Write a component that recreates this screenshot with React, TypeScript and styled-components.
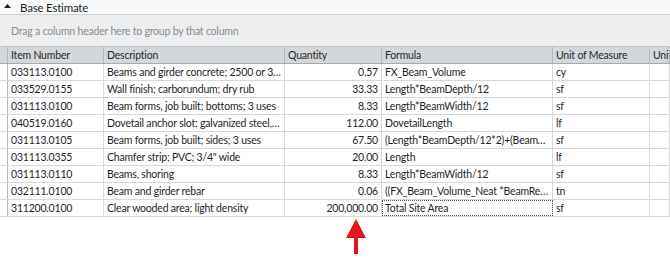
import React from 'react';
import styled, { createGlobalStyle } from 'styled-components';

type Row = {
  item: string;
  desc: string;
  qty: string;
  formula: string;
  unit: string;
};

const rows: Row[] = [
  { item: '033113.0100', desc: 'Beams and girder concrete; 2500 or 3000 psi', qty: '0.57', formula: 'FX_Beam_Volume', unit: 'cy' },
  { item: '033529.0155', desc: 'Wall finish; carborundum; dry rub', qty: '33.33', formula: 'Length*BeamDepth/12', unit: 'sf' },
  { item: '031113.0100', desc: 'Beam forms, job built; bottoms; 3 uses', qty: '8.33', formula: 'Length*BeamWidth/12', unit: 'sf' },
  { item: '040519.0160', desc: 'Dovetail anchor slot; galvanized steel, 24 ga', qty: '112.00', formula: 'DovetailLength', unit: 'lf' },
  { item: '031113.0105', desc: 'Beam forms, job built; sides; 3 uses', qty: '67.50', formula: '(Length*BeamDepth/12*2)+(BeamWidth*Length/12)', unit: 'sf' },
  { item: '031113.0355', desc: 'Chamfer strip; PVC; 3/4" wide', qty: '20.00', formula: 'Length', unit: 'lf' },
  { item: '031113.0110', desc: 'Beams, shoring', qty: '8.33', formula: 'Length*BeamWidth/12', unit: 'sf' },
  { item: '032111.0100', desc: 'Beam and girder rebar', qty: '0.06', formula: '((FX_Beam_Volume_Neat *BeamRebarLbs)/2000)', unit: 'tn' },
  { item: '311200.0100', desc: 'Clear wooded area; light density', qty: '200,000.00', formula: 'Total Site Area', unit: 'sf' },
];

const COLS = '8px 96px 181px 97px 171px 97px 1fr';

const App = () => {
  return (
    <>
      <GlobalStyle />
      <S.Page>
        <S.TitleBar>
          <S.Caret viewBox="0 0 7 4">
            <path d="M0 4 L3.5 0 L7 4 Z" fill="#222" />
          </S.Caret>
          Base Estimate
        </S.TitleBar>
        <S.GroupPanel>Drag a column header here to group by that column</S.GroupPanel>
        <S.Grid>
          <S.HeaderRow>
            <S.HeadCell />
            <S.HeadCell>Item Number</S.HeadCell>
            <S.HeadCell>Description</S.HeadCell>
            <S.HeadCell>Quantity</S.HeadCell>
            <S.HeadCell>Formula</S.HeadCell>
            <S.HeadCell>Unit of Measure</S.HeadCell>
            <S.HeadCell>Unit Cost</S.HeadCell>
          </S.HeaderRow>
          {rows.map((r, i) => {
            const last = i === rows.length - 1;
            return (
              <S.Row key={i}>
                <S.Cell />
                <S.Cell>{r.item}</S.Cell>
                <S.Cell>{r.desc}</S.Cell>
                <S.Cell $right>{r.qty}</S.Cell>
                <S.Cell $focused={last}>{r.formula}</S.Cell>
                <S.Cell>{r.unit}</S.Cell>
                <S.Cell />
              </S.Row>
            );
          })}
        </S.Grid>
        <S.Arrow viewBox="0 0 20 36">
          <path d="M10 0 L20 19 L12 19 L12 35 L8 35 L8 19 L0 19 Z" fill="#e3141b" />
        </S.Arrow>
      </S.Page>
    </>
  );
};

export default App;

const GlobalStyle = createGlobalStyle`
  html, body {
    margin: 0;
    padding: 0;
    background: #ffffff;
  }
  body {
    font-family: 'Lato', 'Liberation Sans', sans-serif;
    font-size: 10.5px;
    letter-spacing: -0.2px;
    color: #1f1f1f;
  }
  * {
    box-sizing: border-box;
  }
`;

const S: any = {};

S.Page = styled.div`
  position: relative;
  width: 670px;
  height: 274px;
  overflow: hidden;
  background: #fff;
`;

S.TitleBar = styled.div`
  display: flex;
  align-items: center;
  height: 15px;
  padding-left: 4px;
  background: #fafafa;
  border-bottom: 1px solid #cfd2d4;
  font-size: 11.5px;
  color: #1e1e1e;
`;

S.Caret = styled.svg`
  width: 7px;
  height: 4px;
  margin: 0 9px 2px 0;
`;

S.GroupPanel = styled.div`
  display: flex;
  align-items: center;
  height: 31px;
  padding-left: 11px;
  background: #eceeef;
  color: #8a8d90;
  font-size: 10.5px;
`;

S.Grid = styled.div`
  display: flex;
  flex-direction: column;
`;

S.HeaderRow = styled.div`
  display: grid;
  grid-template-columns: ${COLS};
  height: 18px;
  background: #d3d7d9;
  border-top: 1px solid #c4c8cb;
  border-bottom: 1px solid #a8acaf;
`;

S.HeadCell = styled.div`
  padding-left: 3px;
  line-height: 16px;
  border-right: 1px solid #b4b8bb;
  white-space: nowrap;
  overflow: hidden;
  color: #2a2a2a;
  &:first-child {
    padding: 0;
  }
`;

S.Row = styled.div`
  display: grid;
  grid-template-columns: ${COLS};
  height: 17px;
  border-bottom: 1px solid #d6d8da;
`;

S.Cell = styled.div<{ $right?: boolean; $focused?: boolean }>`
  padding: 0 3px;
  line-height: 16px;
  text-align: ${(p) => (p.$right ? 'right' : 'left')};
  border-right: 1px solid #d6d8da;
  white-space: nowrap;
  overflow: hidden;
  text-overflow: ellipsis;
  min-width: 0;
  outline: ${(p) => (p.$focused ? '1px dotted #555' : 'none')};
  outline-offset: -1px;
  &:first-child {
    padding: 0;
    border-right-color: #b4b8bb;
  }
`;

S.Arrow = styled.svg`
  position: absolute;
  left: 346px;
  top: 219px;
  width: 20px;
  height: 36px;
`;
